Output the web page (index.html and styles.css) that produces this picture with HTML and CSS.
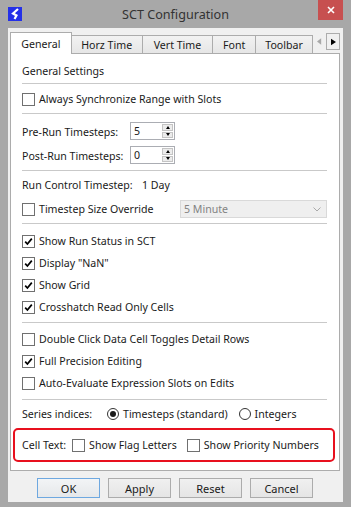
FILE: index.html
```html
<!DOCTYPE html>
<html lang="en">
<head>
  <meta charset="UTF-8" />
  <title>SCT Configuration</title>
  <link rel="stylesheet" href="styles.css">
</head>
<body>
  <div class="window">
    <div class="titlebar">
      <svg class="app-icon" viewBox="0 0 14 14">
        <rect width="14" height="14" fill="#2430e8"/>
        <path d="M10 2 L5 6.5 L8.5 8.5 L6.5 12" fill="none" stroke="#fff" stroke-width="2.2" stroke-linejoin="miter"/>
      </svg>
      <span class="title">SCT Configuration</span>
      <div class="close">
        <svg viewBox="0 0 8 8" width="8" height="8"><path d="M1 1 L7 7 M7 1 L1 7" stroke="#fff" stroke-width="1.6"/></svg>
      </div>
    </div>

    <div class="client">
      <div class="tabs">
        <div class="tab active" style="width:62px">General</div>
        <div class="tab" style="width:72px">Horz Time</div>
        <div class="tab" style="width:72px">Vert Time</div>
        <div class="tab" style="width:44px">Font</div>
        <div class="tab" style="width:58px">Toolbar</div>
        <div class="tab-scroll">
          <span class="scroll-btn">
            <svg viewBox="0 0 6 8" width="5" height="7"><polygon points="5,0 5,8 0,4" fill="#a8a8a8"/></svg>
          </span>
          <span class="scroll-btn framed">
            <svg viewBox="0 0 6 8" width="5" height="8"><polygon points="0,0 0,8 6,4" fill="#000"/></svg>
          </span>
        </div>
      </div>

      <div class="panel">
        <div class="heading">General Settings</div>
        <div class="sep first"></div>

        <div class="group g-sync">
          <label class="row"><span class="cb"></span>Always Synchronize Range with Slots</label>
        </div>
        <div class="sep"></div>

        <div class="group g-steps">
          <div class="row tall">
            <span class="field-label">Pre-Run Timesteps:</span>
            <span class="spin"><span class="spin-value">5</span><span class="spin-btns"><span class="spin-btn up"></span><span class="spin-btn down"></span></span></span>
          </div>
          <div class="row tall">
            <span class="field-label">Post-Run Timesteps:</span>
            <span class="spin"><span class="spin-value">0</span><span class="spin-btns"><span class="spin-btn up"></span><span class="spin-btn down"></span></span></span>
          </div>
        </div>
        <div class="sep"></div>

        <div class="group g-run">
          <div class="row tall">
            <span class="run-label">Run Control Timestep:</span>1 Day
          </div>
          <div class="row tall">
            <label class="check"><span class="cb"></span>Timestep Size Override</label>
            <span class="select">5 Minute
              <svg viewBox="0 0 8 5" width="8" height="5"><polyline points="0.5,0.5 4,4 7.5,0.5" fill="none" stroke="#a9a9a9"/></svg>
            </span>
          </div>
        </div>
        <div class="sep"></div>

        <div class="group g-view">
          <label class="row"><span class="cb on"></span>Show Run Status in SCT</label>
          <label class="row"><span class="cb on"></span>Display "NaN"</label>
          <label class="row"><span class="cb on"></span>Show Grid</label>
          <label class="row"><span class="cb on"></span>Crosshatch Read Only Cells</label>
        </div>
        <div class="sep"></div>

        <div class="group g-edit">
          <label class="row"><span class="cb"></span>Double Click Data Cell Toggles Detail Rows</label>
          <label class="row"><span class="cb on"></span>Full Precision Editing</label>
          <label class="row"><span class="cb"></span>Auto-Evaluate Expression Slots on Edits</label>
        </div>
        <div class="sep"></div>

        <div class="row series">
          <span class="series-label">Series indices:</span>
          <label class="check"><span class="radio on"></span>Timesteps (standard)</label>
          <label class="check"><span class="radio"></span>Integers</label>
        </div>

        <div class="row highlight">
          <span class="cell-label">Cell Text:</span>
          <label class="check"><span class="cb"></span>Show Flag Letters</label>
          <label class="check"><span class="cb"></span>Show Priority Numbers</label>
        </div>
      </div>

      <div class="buttons">
        <button class="btn default">OK</button>
        <button class="btn">Apply</button>
        <button class="btn">Reset</button>
        <button class="btn">Cancel</button>
      </div>
    </div>
  </div>

  <script>
    // draw the tick into every checked box
    document.querySelectorAll('.cb.on').forEach(box => {
      box.innerHTML = '<svg viewBox="0 0 11 11" width="11" height="11"><path d="M2.2 5.6 L4.4 8 L8.8 2.6" fill="none" stroke="#000" stroke-width="1.7"/></svg>';
    });
  </script>
</body>
</html>
```

FILE: styles.css
```css
* {
  box-sizing: border-box;
}

body {
  margin: 0;
  font-family: "Noto Sans", "Liberation Sans", sans-serif;
  font-size: 10.6px;
  color: #1a1a1a;
  background: #a8a8a8;
}

.window {
  width: 351px;
  height: 507px;
  background: #a8a8a8;
  display: flex;
  flex-direction: column;
}

/* title bar */
.titlebar {
  height: 28px;
  padding: 0 8px;
  display: grid;
  grid-template-columns: 1fr auto 1fr;
  align-items: center;
}

.app-icon {
  width: 14px;
  height: 14px;
  justify-self: start;
}

.title {
  font-size: 12.6px;
  color: #333;
}

.close {
  justify-self: end;
  align-self: start;
  width: 25px;
  height: 20px;
  background: #c75050;
  display: flex;
  align-items: center;
  justify-content: center;
}

/* client area */
.client {
  flex: 1;
  margin: 0 8px 5px;
  padding: 4px 3px 0 2px;
  background: #f0f0f0;
  display: flex;
  flex-direction: column;
}

.tabs {
  height: 21px;
  display: flex;
  align-items: flex-end;
  position: relative;
  z-index: 1;
}

.tab {
  height: 18px;
  margin-right: -1px;
  border: 1px solid #acacac;
  border-bottom: none;
  background: linear-gradient(#f2f2f2, #e6e6e6);
  display: flex;
  align-items: center;
  justify-content: center;
}

.tab.active {
  height: 22px;
  margin-bottom: -1px;
  background: #fff;
  position: relative;
  z-index: 2;
}

.tab-scroll {
  align-self: flex-start;
  margin: 1px 0 0 1px;
  height: 17px;
  display: flex;
}

.scroll-btn {
  width: 13px;
  display: flex;
  align-items: center;
  justify-content: center;
}

.scroll-btn.framed {
  width: 14px;
  border: 1px solid #acacac;
  background: #f0f0f0;
}

.panel {
  height: 418px;
  padding: 0 12px 0 11px;
  background: #fff;
  border: 1px solid #acacac;
  display: flex;
  flex-direction: column;
}

.heading {
  height: 22px;
  margin-top: 6px;
  display: flex;
  align-items: center;
}

.sep {
  height: 1px;
  background: #c9c9c9;
  flex: none;
}

.sep.first {
  margin-top: 1px;
}

.group {
  display: flex;
  flex-direction: column;
}

.g-sync { padding: 4px 0 3px; }
.g-steps { padding: 6px 0 2px; }
.g-run { padding: 2px 0 2px; }
.g-view { padding: 6px 0 4px; }
.g-edit { padding: 5px 0 5px; }

.row {
  height: 22px;
  display: flex;
  align-items: center;
  flex: none;
}

.row.tall {
  height: 24px;
}

.check {
  display: flex;
  align-items: center;
}

/* checkbox and radio */
.cb {
  width: 13px;
  height: 13px;
  margin-right: 4px;
  border: 1px solid #707070;
  background: #fff;
  display: flex;
  align-items: center;
  justify-content: center;
  flex: none;
}

.radio {
  width: 12px;
  height: 12px;
  margin-right: 4px;
  border: 1px solid #333;
  border-radius: 50%;
  background: #fff;
  display: flex;
  align-items: center;
  justify-content: center;
  flex: none;
}

.radio.on::after {
  content: "";
  width: 6px;
  height: 6px;
  border-radius: 50%;
  background: #1a1a1a;
}

/* spinners */
.field-label {
  width: 108px;
}

.spin {
  width: 45px;
  height: 18px;
  margin-top: -2px;
  border: 1px solid #abadb3;
  background: #fff;
  display: flex;
}

.spin-value {
  flex: 1;
  padding-left: 3px;
  display: flex;
  align-items: center;
}

.spin-btns {
  width: 12px;
  padding: 1px 1px 1px 0;
  display: flex;
  flex-direction: column;
  gap: 1px;
}

.spin-btn {
  flex: 1;
  border: 1px solid #c4c4c4;
  background: #ececec;
  display: flex;
  align-items: center;
  justify-content: center;
}

.spin-btn::after {
  content: "";
  border-left: 2.5px solid transparent;
  border-right: 2.5px solid transparent;
}

.spin-btn.up::after {
  border-bottom: 3px solid #000;
}

.spin-btn.down::after {
  border-top: 3px solid #000;
}

/* run control */
.run-label {
  width: 120px;
}

.select {
  width: 147px;
  height: 18px;
  margin-left: auto;
  padding: 0 5px 0 3px;
  border: 1px solid #d9d9d9;
  background: #efefef;
  color: #838383;
  display: flex;
  align-items: center;
  justify-content: space-between;
}

/* series indices */
.series {
  margin-top: 3px;
}

.series-label {
  width: 85px;
}

.series .check + .check {
  margin-left: 11px;
}

/* highlighted cell text option */
.highlight {
  height: 34px;
  margin: 3px -8px 0 -9px;
  padding-left: 7px;
  border: 2px solid #e8101e;
  border-radius: 5px;
}

.cell-label {
  margin-right: 6px;
}

.highlight .check + .check {
  margin-left: 10px;
}

/* dialog buttons */
.buttons {
  margin-top: 7px;
  display: flex;
  justify-content: center;
  gap: 8px;
}

.btn {
  width: 63px;
  height: 20px;
  padding: 0;
  font: inherit;
  font-size: 11px;
  color: #1a1a1a;
  border: 1px solid #acacac;
  background: linear-gradient(#f0f0f0, #e5e5e5);
}

.btn.default {
  border-color: #6ea8e0;
  background: linear-gradient(#f2f4f6, #e6e8ea);
}
```
